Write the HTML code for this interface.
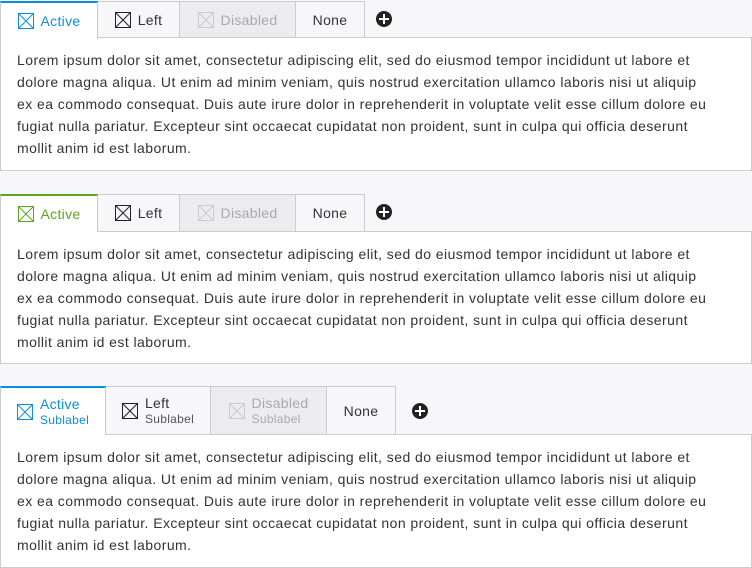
<!DOCTYPE html>
<html><head><style>
*{box-sizing:border-box;margin:0;padding:0}
body{width:752px;height:568px;background:#f7f7f9;font-family:"Liberation Sans",sans-serif;position:relative;overflow:hidden}
.tabs{position:absolute;left:0;height:37px}
.tab{position:absolute;top:0;height:37px;border:1px solid #ccc;border-bottom:none;background:#f7f7f9;font-size:14px;letter-spacing:0.3px;color:#333;display:flex;align-items:center;justify-content:center;gap:7px}
.tab.act{background:#fff;height:38px;border-top:2px solid #0b8ede;color:#0b8ede;z-index:2}
.tab.dis{background:#ececef;color:#aaa}
.panel{position:absolute;left:0;width:752px;background:#fff;border:1px solid #ccc;padding:11px 0 0 16px;font-size:14px;letter-spacing:0.44px;line-height:22px;color:#333;white-space:nowrap}
.plus{position:absolute;width:16px;height:16px;border-radius:50%;background:#222}
.plus:before{content:"";position:absolute;left:3px;top:7px;width:10px;height:2px;background:#fff}
.plus:after{content:"";position:absolute;left:7px;top:3px;width:2px;height:10px;background:#fff}
.sub{font-size:12px;display:block;line-height:15px}
.lb{line-height:17px;text-align:left}
</style></head><body>

<div class="tabs" style="top:1px">
<div class="tab act" style="left:0;width:98px"><svg width="16" height="16"><rect x="0.5" y="0.5" width="15" height="15" fill="none" stroke="currentColor"/><path d="M1 1L15 15M15 1L1 15" stroke="currentColor"/></svg>Active</div>
<div class="tab" style="left:97px;width:83px"><svg width="16" height="16"><rect x="0.5" y="0.5" width="15" height="15" fill="none" stroke="#222"/><path d="M1 1L15 15M15 1L1 15" stroke="#222"/></svg>Left</div>
<div class="tab dis" style="left:179px;width:117px"><svg width="16" height="16"><rect x="0.5" y="0.5" width="15" height="15" fill="none" stroke="#ccc"/><path d="M1 1L15 15M15 1L1 15" stroke="#ccc"/></svg>Disabled</div>
<div class="tab" style="left:295px;width:70px">None</div>
</div>
<div class="plus" style="left:376px;top:11px"></div>
<div class="panel" style="top:37px;height:134px">Lorem ipsum dolor sit amet, consectetur adipiscing elit, sed do eiusmod tempor incididunt ut labore et<br>dolore magna aliqua. Ut enim ad minim veniam, quis nostrud exercitation ullamco laboris nisi ut aliquip<br>ex ea commodo consequat. Duis aute irure dolor in reprehenderit in voluptate velit esse cillum dolore eu<br>fugiat nulla pariatur. Excepteur sint occaecat cupidatat non proident, sunt in culpa qui officia deserunt<br>mollit anim id est laborum.</div>

<div class="tabs" style="top:194px">
<div class="tab act" style="left:0;width:98px;border-top-color:#5ea51f;color:#5ea51f"><svg width="16" height="16"><rect x="0.5" y="0.5" width="15" height="15" fill="none" stroke="currentColor"/><path d="M1 1L15 15M15 1L1 15" stroke="currentColor"/></svg>Active</div>
<div class="tab" style="left:97px;width:83px"><svg width="16" height="16"><rect x="0.5" y="0.5" width="15" height="15" fill="none" stroke="#222"/><path d="M1 1L15 15M15 1L1 15" stroke="#222"/></svg>Left</div>
<div class="tab dis" style="left:179px;width:117px"><svg width="16" height="16"><rect x="0.5" y="0.5" width="15" height="15" fill="none" stroke="#ccc"/><path d="M1 1L15 15M15 1L1 15" stroke="#ccc"/></svg>Disabled</div>
<div class="tab" style="left:295px;width:70px">None</div>
</div>
<div class="plus" style="left:376px;top:204px"></div>
<div class="panel" style="top:231px;height:133px">Lorem ipsum dolor sit amet, consectetur adipiscing elit, sed do eiusmod tempor incididunt ut labore et<br>dolore magna aliqua. Ut enim ad minim veniam, quis nostrud exercitation ullamco laboris nisi ut aliquip<br>ex ea commodo consequat. Duis aute irure dolor in reprehenderit in voluptate velit esse cillum dolore eu<br>fugiat nulla pariatur. Excepteur sint occaecat cupidatat non proident, sunt in culpa qui officia deserunt<br>mollit anim id est laborum.</div>

<div class="tabs" style="top:386px;height:48px">
<div class="tab act" style="left:0;width:106px;height:49px"><svg width="16" height="16"><rect x="0.5" y="0.5" width="15" height="15" fill="none" stroke="currentColor"/><path d="M1 1L15 15M15 1L1 15" stroke="currentColor"/></svg><span class="lb">Active<span class="sub">Sublabel</span></span></div>
<div class="tab" style="left:105px;width:106px;height:48px"><svg width="16" height="16"><rect x="0.5" y="0.5" width="15" height="15" fill="none" stroke="#222"/><path d="M1 1L15 15M15 1L1 15" stroke="#222"/></svg><span class="lb">Left<span class="sub" style="color:#555">Sublabel</span></span></div>
<div class="tab dis" style="left:210px;width:117px;height:48px"><svg width="16" height="16"><rect x="0.5" y="0.5" width="15" height="15" fill="none" stroke="#ccc"/><path d="M1 1L15 15M15 1L1 15" stroke="#ccc"/></svg><span class="lb">Disabled<span class="sub">Sublabel</span></span></div>
<div class="tab" style="left:326px;width:70px;height:48px">None</div>
</div>
<div class="plus" style="left:412px;top:403px"></div>
<div class="panel" style="top:434px;height:134px">Lorem ipsum dolor sit amet, consectetur adipiscing elit, sed do eiusmod tempor incididunt ut labore et<br>dolore magna aliqua. Ut enim ad minim veniam, quis nostrud exercitation ullamco laboris nisi ut aliquip<br>ex ea commodo consequat. Duis aute irure dolor in reprehenderit in voluptate velit esse cillum dolore eu<br>fugiat nulla pariatur. Excepteur sint occaecat cupidatat non proident, sunt in culpa qui officia deserunt<br>mollit anim id est laborum.</div>
</body></html>
